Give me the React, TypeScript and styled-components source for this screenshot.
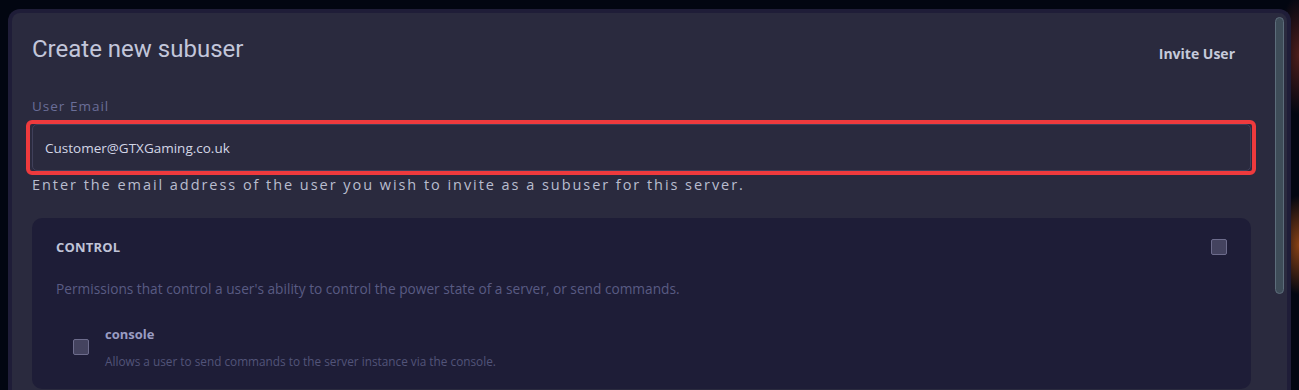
import styled, { createGlobalStyle } from "styled-components";

const GlobalStyle = createGlobalStyle`
  html, body {
    margin: 0;
    padding: 0;
    background: #020611;
    font-family: "Open Sans", "Noto Sans", sans-serif;
  }
  * {
    box-sizing: border-box;
  }
`;

const Page = styled.div`
  position: relative;
  width: 1299px;
  height: 390px;
  overflow: hidden;
  padding: 9px 8px 0 8px;
  background:
    radial-gradient(ellipse 22px 60px at 1299px 55px, rgba(110, 40, 30, 0.7), transparent),
    radial-gradient(ellipse 22px 50px at 1299px 245px, rgba(170, 80, 20, 0.8), transparent),
    #020611;
`;

const Modal = styled.div`
  display: flex;
  height: 420px;
  border: 4px solid #1f1d38;
  border-bottom: none;
  border-radius: 12px 12px 0 0;
  background: #2a2a3e;
  padding: 0 3px 0 20px;
`;

const Content = styled.div`
  flex: 1;
  padding-top: 21px;
  padding-right: 24px;
`;

const Header = styled.div`
  display: flex;
  justify-content: space-between;
  align-items: flex-start;
  margin-bottom: 33px;
`;

const Title = styled.h2`
  margin: 0;
  font-family: Roboto, sans-serif;
  font-weight: 400;
  font-size: 24px;
  line-height: 30px;
  color: #c2c6da;
`;

const InviteButton = styled.button`
  margin: 10px 16px 0 0;
  background: none;
  border: none;
  padding: 0;
  font-family: "Open Sans", sans-serif;
  font-weight: 700;
  font-size: 14px;
  color: #c6cadb;
`;

const Label = styled.label`
  display: block;
  font-size: 13.5px;
  line-height: 18px;
  letter-spacing: 1px;
  color: #6a6e98;
  margin-bottom: 5px;
`;

const InputRing = styled.div`
  border: 4px solid #ee3a3d;
  border-radius: 6px;
  padding: 0 1px 0 2px;
  margin: 0 -5px 0 -6px;
`;

const EmailInput = styled.input`
  display: block;
  width: 100%;
  height: 47px;
  background: #2a2a3e;
  border: 1px solid #40405a;
  border-radius: 5px;
  padding: 0 12px;
  font-family: "Open Sans", sans-serif;
  font-size: 13.5px;
  color: #d3d6e6;
  outline: none;
`;

const Help = styled.p`
  margin: 0;
  font-size: 14.5px;
  line-height: 19px;
  letter-spacing: 1.95px;
  color: #b9bdcf;
`;

const Group = styled.section`
  margin-top: 24px;
  background: #1e1d37;
  border-radius: 10px;
  padding: 20px 24px;
`;

const GroupHead = styled.div`
  display: flex;
  justify-content: space-between;
  align-items: center;
`;

const GroupTitle = styled.h3`
  margin: 0;
  font-size: 13px;
  font-weight: 700;
  color: #c0c4d8;
  letter-spacing: 0.2px;
`;

const Box = styled.span`
  display: inline-block;
  width: 16px;
  height: 16px;
  flex-shrink: 0;
  background: #44435f;
  border: 1px solid #6d6c8c;
  border-radius: 2px;
`;

const GroupText = styled.p`
  margin: 23px 0 0;
  font-size: 13.7px;
  color: #595b83;
`;

const Perm = styled.div`
  display: flex;
  align-items: center;
  gap: 16px;
  margin-top: 27px;
  padding-left: 17px;
`;

const PermName = styled.div`
  font-size: 13px;
  font-weight: 700;
  color: #9a9cc2;
`;

const PermText = styled.div`
  margin-top: 10px;
  font-size: 11.8px;
  color: #525479;
`;

const Scroll = styled.div`
  width: 9px;
  margin-top: 4px;
  height: 277px;
  background: #3e4c58;
  border: 1px solid #5d6d7b;
  border-radius: 5px;
`;

export default function App() {
  return (
    <>
      <GlobalStyle />
      <Page>
        <Modal>
          <Content>
            <Header>
              <Title>Create new subuser</Title>
              <InviteButton>Invite User</InviteButton>
            </Header>
            <Label>User Email</Label>
            <InputRing>
              <EmailInput defaultValue="Customer@GTXGaming.co.uk" />
            </InputRing>
            <Help>Enter the email address of the user you wish to invite as a subuser for this server.</Help>
            <Group>
              <GroupHead>
                <GroupTitle>CONTROL</GroupTitle>
                <Box />
              </GroupHead>
              <GroupText>Permissions that control a user's ability to control the power state of a server, or send commands.</GroupText>
              <Perm>
                <Box />
                <div>
                  <PermName>console</PermName>
                  <PermText>Allows a user to send commands to the server instance via the console.</PermText>
                </div>
              </Perm>
            </Group>
          </Content>
          <Scroll />
        </Modal>
      </Page>
    </>
  );
}
